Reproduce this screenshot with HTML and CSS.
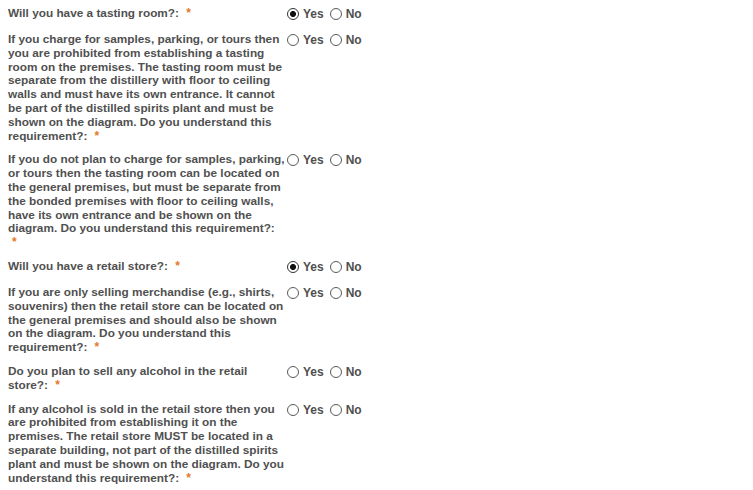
FILE: index.html
```html
<!DOCTYPE html>
<html>
<head>
<meta charset="utf-8">
<link rel="stylesheet" href="styles.css">
</head>
<body>
<form class="form">
  <div class="row">
    <div class="label">Will you have a tasting room?: <span class="req">*</span></div>
    <div class="opts">
      <label class="opt"><input type="radio" name="q1" checked> Yes</label>
      <label class="opt"><input type="radio" name="q1"> No</label>
    </div>
  </div>
  <div class="row">
    <div class="label">If you charge for samples, parking, or tours then you are prohibited from establishing a tasting room on the premises. The tasting room must be separate from the distillery with floor to ceiling walls and must have its own entrance. It cannot be part of the distilled spirits plant and must be shown on the diagram. Do you understand this requirement?: <span class="req">*</span></div>
    <div class="opts">
      <label class="opt"><input type="radio" name="q2"> Yes</label>
      <label class="opt"><input type="radio" name="q2"> No</label>
    </div>
  </div>
  <div class="row">
    <div class="label">If you do not plan to charge for samples, parking, or tours then the tasting room can be located on the general premises, but must be separate from the bonded premises with floor to ceiling walls, have its own entrance and be shown on the diagram. Do you understand this requirement?: <span class="req">*</span></div>
    <div class="opts">
      <label class="opt"><input type="radio" name="q3"> Yes</label>
      <label class="opt"><input type="radio" name="q3"> No</label>
    </div>
  </div>
  <div class="row">
    <div class="label">Will you have a retail store?: <span class="req">*</span></div>
    <div class="opts">
      <label class="opt"><input type="radio" name="q4" checked> Yes</label>
      <label class="opt"><input type="radio" name="q4"> No</label>
    </div>
  </div>
  <div class="row">
    <div class="label">If you are only selling merchandise (e.g., shirts, souvenirs) then the retail store can be located on the general premises and should also be shown on the diagram. Do you understand this requirement?: <span class="req">*</span></div>
    <div class="opts">
      <label class="opt"><input type="radio" name="q5"> Yes</label>
      <label class="opt"><input type="radio" name="q5"> No</label>
    </div>
  </div>
  <div class="row">
    <div class="label">Do you plan to sell any alcohol in the retail store?: <span class="req">*</span></div>
    <div class="opts">
      <label class="opt"><input type="radio" name="q6"> Yes</label>
      <label class="opt"><input type="radio" name="q6"> No</label>
    </div>
  </div>
  <div class="row">
    <div class="label">If any alcohol is sold in the retail store then you are prohibited from establishing it on the premises. The retail store MUST be located in a separate building, not part of the distilled spirits plant and must be shown on the diagram. Do you understand this requirement?: <span class="req">*</span></div>
    <div class="opts">
      <label class="opt"><input type="radio" name="q7"> Yes</label>
      <label class="opt"><input type="radio" name="q7"> No</label>
    </div>
  </div>
</form>
</body>
</html>
```

FILE: styles.css
```css
html, body {
  margin: 0;
  padding: 0;
  background: #ffffff;
}

body {
  font-family: "Liberation Sans", Arial, sans-serif;
  font-size: 11.8px;
  font-weight: bold;
  color: #505050;
}

.form {
  display: flex;
  flex-direction: column;
  gap: 10px;
  padding: 7px 8px;
}

.row {
  display: grid;
  grid-template-columns: 278px auto;
  align-items: start;
}

.label {
  line-height: 13.8px;
}

.req {
  color: #e07b2a;
  font-size: 12px;
  margin-left: 4px;
}

.opts {
  display: flex;
  align-items: flex-start;
  height: 16px;
  gap: 6px;
  padding-left: 1px;
}

.opt {
  display: flex;
  align-items: center;
  gap: 4px;
  height: 14px;
  font-size: 12px;
}

.opt input {
  appearance: none;
  -webkit-appearance: none;
  margin: 0;
  width: 12px;
  height: 12px;
  border: 1px solid #5a5a5a;
  border-radius: 50%;
  background: #ffffff;
  box-sizing: border-box;
}

.opt input:checked {
  border-color: #333333;
  background: radial-gradient(circle, #111111 0 2.6px, #ffffff 3.4px);
}
```
